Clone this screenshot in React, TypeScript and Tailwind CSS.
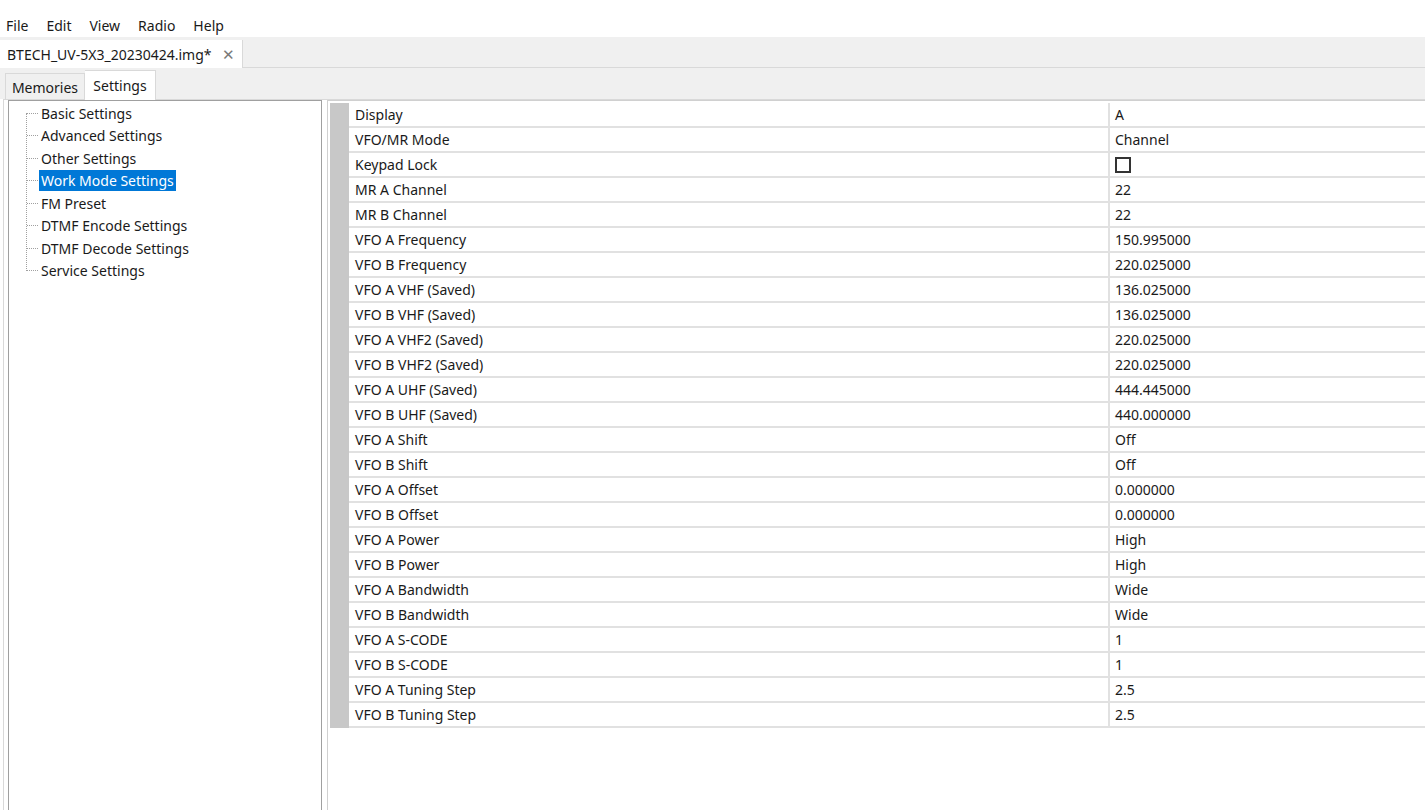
import React from 'react';

const menus = ['File', 'Edit', 'View', 'Radio', 'Help'];

const treeItems = [
  'Basic Settings',
  'Advanced Settings',
  'Other Settings',
  'Work Mode Settings',
  'FM Preset',
  'DTMF Encode Settings',
  'DTMF Decode Settings',
  'Service Settings',
];

const rows: [string, string][] = [
  ['Display', 'A'],
  ['VFO/MR Mode', 'Channel'],
  ['Keypad Lock', '__check'],
  ['MR A Channel', '22'],
  ['MR B Channel', '22'],
  ['VFO A Frequency', '150.995000'],
  ['VFO B Frequency', '220.025000'],
  ['VFO A VHF (Saved)', '136.025000'],
  ['VFO B VHF (Saved)', '136.025000'],
  ['VFO A VHF2 (Saved)', '220.025000'],
  ['VFO B VHF2 (Saved)', '220.025000'],
  ['VFO A UHF (Saved)', '444.445000'],
  ['VFO B UHF (Saved)', '440.000000'],
  ['VFO A Shift', 'Off'],
  ['VFO B Shift', 'Off'],
  ['VFO A Offset', '0.000000'],
  ['VFO B Offset', '0.000000'],
  ['VFO A Power', 'High'],
  ['VFO B Power', 'High'],
  ['VFO A Bandwidth', 'Wide'],
  ['VFO B Bandwidth', 'Wide'],
  ['VFO A S-CODE', '1'],
  ['VFO B S-CODE', '1'],
  ['VFO A Tuning Step', '2.5'],
  ['VFO B Tuning Step', '2.5'],
];

export default function App() {
  const selected = 'Work Mode Settings';

  return (
    <div
      className="w-full h-[810px] overflow-hidden bg-white text-[14px] text-[#1a1a1a] flex flex-col"
      style={{ fontFamily: '"Noto Sans", "Open Sans", "Liberation Sans", sans-serif' }}
    >
      {/* Menu bar */}
      <div className="h-[37px] shrink-0 flex items-end pb-[2px] pl-[6px] leading-[19px]">
        {menus.map((m) => (
          <span key={m} className="mr-[18px]">{m}</span>
        ))}
      </div>

      {/* File tabs */}
      <div className="h-[31px] shrink-0 bg-[#f0f0f0] border-b border-[#d9d9d9] flex items-end">
        <div className="h-[28px] w-[243px] bg-white border-r border-[#d9d9d9] flex items-center pl-[7px] -mb-px">
          <span>BTECH_UV-5X3_20230424.img*</span>
          <span className="ml-[10px] text-[#7a7a7a] text-[15px]">✕</span>
        </div>
      </div>

      {/* Inner tabs */}
      <div className="h-[31px] shrink-0 bg-[#f0f0f0] flex items-end pl-[5px]">
        <div className="h-[26px] w-[80px] border border-b-0 border-[#d9d9d9] bg-[#f0f0f0] flex items-center justify-center pt-[1px]">
          Memories
        </div>
        <div className="h-[30px] w-[71px] border border-b-0 border-l-0 border-[#d9d9d9] bg-white flex items-center justify-center -mb-px relative z-10">
          Settings
        </div>
      </div>

      {/* Content */}
      <div className="flex-1 flex border-t border-[#d9d9d9] ml-[3px] border-l min-h-0">
        {/* Tree */}
        <div className="ml-[4px] w-[314px] border-x border-t border-[#a0a0a0] bg-white relative pt-[1px]">
          <div className="absolute left-[17px] top-[12px] h-[158px] border-l border-dotted border-[#a0a0a0]" />
          {treeItems.map((t) => (
            <div key={t} className="h-[22.5px] flex items-center pl-[18px]">
              <span className="w-[11px] border-t border-dotted border-[#a0a0a0] mr-[1px]" />
              <span
                className={
                  t === selected
                    ? 'bg-[#0078d7] text-white px-[2px] h-[21px] flex items-center'
                    : 'px-[2px]'
                }
              >
                {t}
              </span>
            </div>
          ))}
        </div>

        {/* Settings table */}
        <div className="ml-[5px] flex-1 border-l border-t border-[#d0d0d0] pl-[2px] pt-[2px]">
          <div className="flex">
            <div className="w-[19px] bg-[#c8c8c8]" />
            <div className="flex-1">
              {rows.map(([name, value]) => (
                <div key={name} className="h-[25px] flex border-b-2 border-[#e1e1e1]">
                  <div className="w-[759px] pl-[6px] flex items-center">{name}</div>
                  <div className="flex-1 border-l-2 border-[#e1e1e1] pl-[5px] flex items-center">
                    {value === '__check' ? (
                      <span className="w-[16px] h-[16px] border-2 border-[#333333] bg-white" />
                    ) : (
                      value
                    )}
                  </div>
                </div>
              ))}
            </div>
          </div>
        </div>
      </div>
    </div>
  );
}
